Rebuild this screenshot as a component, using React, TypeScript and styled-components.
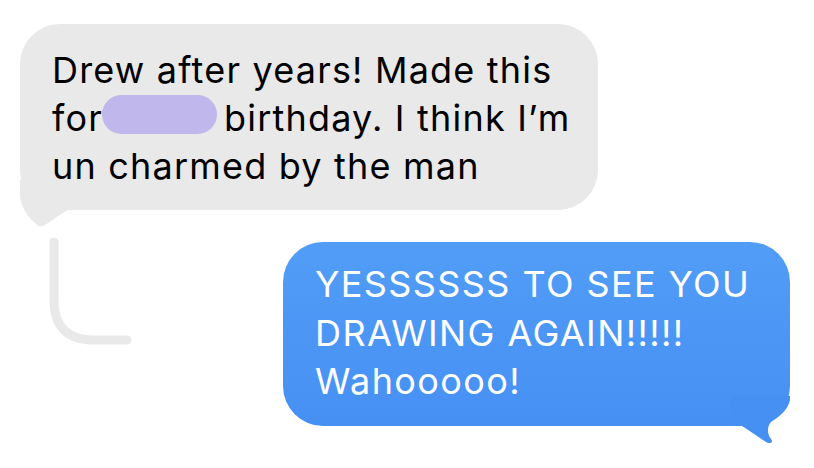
import React from "react";
import styled, { createGlobalStyle } from "styled-components";

const Global = createGlobalStyle`
  html, body { margin: 0; padding: 0; background: #ffffff; }
  body { font-family: Inter, "Noto Sans", "Liberation Sans", sans-serif; }
`;

const Page = styled.div`
  width: 814px;
  height: 468px;
  box-sizing: border-box;
  padding: 24px 0 0 20px;
  display: flex;
  flex-direction: column;
  overflow: hidden;
`;

const Bubble = styled.div<{ $variant: "in" | "out" }>`
  position: relative;
  box-sizing: border-box;
  border-radius: 40px;
  font-size: 36px;
  line-height: 48px;
  white-space: nowrap;
  ${(p) =>
    p.$variant === "in"
      ? `
    width: 578px;
    height: 186px;
    padding: 22px 0 0 32px;
    letter-spacing: 1.2px;
    background: #e9e9e9;
    color: #000000;
  `
      : `
    width: 507px;
    height: 184px;
    padding: 18px 0 0 32px;
    letter-spacing: 1.4px;
    line-height: 48.5px;
    background: linear-gradient(180deg, #519df6 0%, #4690f4 100%);
    color: #ffffff;
  `}
`;

const Tail = styled.svg<{ $side: "left" | "right" }>`
  position: absolute;
  bottom: -20px;
  width: 60px;
  height: 50px;
  ${(p) => (p.$side === "left" ? "left: 0;" : "right: 0;")}
`;

const Redacted = styled.span`
  display: inline-block;
  width: 115px;
  height: 39px;
  margin: 0 7px 0 -1px;
  border-radius: 20px;
  background: #c0b8ec;
  vertical-align: -3px;
`;

const ReplyRow = styled.div`
  display: flex;
  align-items: flex-start;
  margin-top: 28px;
`;

const ReplyLine = styled.svg`
  width: 90px;
  height: 112px;
  margin-left: 26px;
  flex: none;
`;

const OutWrap = styled.div`
  margin-left: 147px;
  margin-top: 4px;
`;

export default function App() {
  return (
    <>
      <Global />
      <Page>
        <Bubble $variant="in">
          Drew after years! Made this
          <br />
          for<Redacted />birthday. I think I’m
          <br />
          un charmed by the man
          <Tail $side="left" viewBox="0 0 60 50">
            <path
              d="M0,0 L0,16 C1,28 9,38 16,44 C18,46.5 21,47 24,45.5 C32,41 38,35 48,30 L48,0 Z"
              fill="#e9e9e9"
            />
          </Tail>
        </Bubble>
        <ReplyRow>
          <ReplyLine viewBox="0 0 90 112">
            <path
              d="M8,4 L8,62 Q8,102 48,102 L81,102"
              fill="none"
              stroke="#e9e9e9"
              strokeWidth="9"
              strokeLinecap="round"
            />
          </ReplyLine>
          <OutWrap>
            <Bubble $variant="out">
              YESSSSSS TO SEE YOU
              <br />
              DRAWING AGAIN!!!!!
              <br />
              Wahooooo!
              <Tail $side="right" viewBox="0 0 60 50">
                <path
                  d="M0,0 L60,0 L60,4 C58,14 50,20 41,26 C37,30 37,38 41,43 C43.5,46 41,48 37,46.5 C29,42 22,36 12,30 L0,30 Z"
                  fill="#4690f4"
                />
              </Tail>
            </Bubble>
          </OutWrap>
        </ReplyRow>
      </Page>
    </>
  );
}
